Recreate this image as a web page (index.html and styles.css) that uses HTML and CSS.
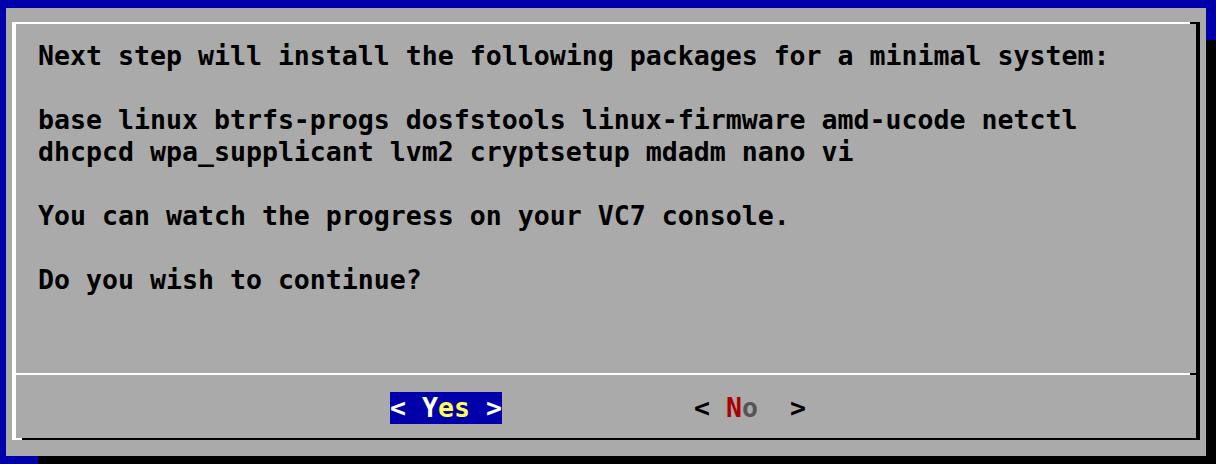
FILE: index.html
```html
<!DOCTYPE html>
<html>
<head>
<meta charset="utf-8">
<link rel="stylesheet" href="styles.css">
</head>
<body>
<div class="screen">
  <div class="dialog">
    <div class="frame">
      <div class="body">
        <p class="line">Next step will install the following packages for a minimal system:</p>
        <p class="line"></p>
        <p class="line">base linux btrfs-progs dosfstools linux-firmware amd-ucode netctl</p>
        <p class="line">dhcpcd wpa_supplicant lvm2 cryptsetup mdadm nano vi</p>
        <p class="line"></p>
        <p class="line">You can watch the progress on your VC7 console.</p>
        <p class="line"></p>
        <p class="line">Do you wish to continue?</p>
      </div>
      <div class="buttons">
        <span class="btn active">&lt; <span class="hot">Y</span><span class="rest">es</span> &gt;</span>
        <span class="btn">&lt; <span class="hot">N</span><span class="rest">o</span>  &gt;</span>
      </div>
    </div>
  </div>
</div>
</body>
</html>
```

FILE: styles.css
```css
html, body {
  margin: 0;
  padding: 0;
}
body {
  width: 1216px;
  height: 464px;
  overflow: hidden;
  background: #0000aa;
  font-family: "DejaVu Sans Mono", "Liberation Mono", monospace;
  font-weight: bold;
  font-size: 26.576px;
  line-height: 32px;
  color: #000;
}
.screen {
  padding: 8px 0 0 6px;
}
.dialog {
  width: 1200px;
  height: 448px;
  box-sizing: border-box;
  background: #aaaaaa;
  box-shadow: 32px 32px 0 #000;
  padding: 14px 6px 16px 6px;
}
.frame {
  position: relative;
  height: 100%;
  box-sizing: border-box;
  border-left: 4px solid #fff;
  border-top: 2px solid #fff;
  border-right: 4px solid #000;
  border-bottom: 2px solid #000;
  display: flex;
  flex-direction: column;
}
.frame::before {
  content: "";
  position: absolute;
  top: -2px;
  right: -4px;
  width: 10px;
  height: 2px;
  background: #000;
}
.frame::after {
  content: "";
  position: absolute;
  bottom: -2px;
  left: -4px;
  width: 10px;
  height: 2px;
  background: #fff;
}
.body {
  height: 349px;
  box-sizing: border-box;
  padding: 16px 0 0 22px;
}
.line {
  margin: 0;
  height: 32px;
  white-space: pre;
}
.buttons {
  position: relative;
  border-top: 2px solid #fff;
  flex: 1;
  display: flex;
  align-items: flex-start;
  gap: 192px;
  padding: 17px 0 0 374px;
}
.buttons::before {
  content: "";
  position: absolute;
  top: -2px;
  right: 0;
  width: 6px;
  height: 2px;
  background: #000;
}
.btn {
  display: block;
  width: 112px;
  height: 32px;
  white-space: pre;
  color: #000;
}
.btn .hot {
  color: #aa0000;
}
.btn .rest {
  color: #555555;
}
.btn.active {
  background: #0000aa;
  color: #fff;
}
.btn.active .hot {
  color: #fff;
}
.btn.active .rest {
  color: #ffff55;
}
```
